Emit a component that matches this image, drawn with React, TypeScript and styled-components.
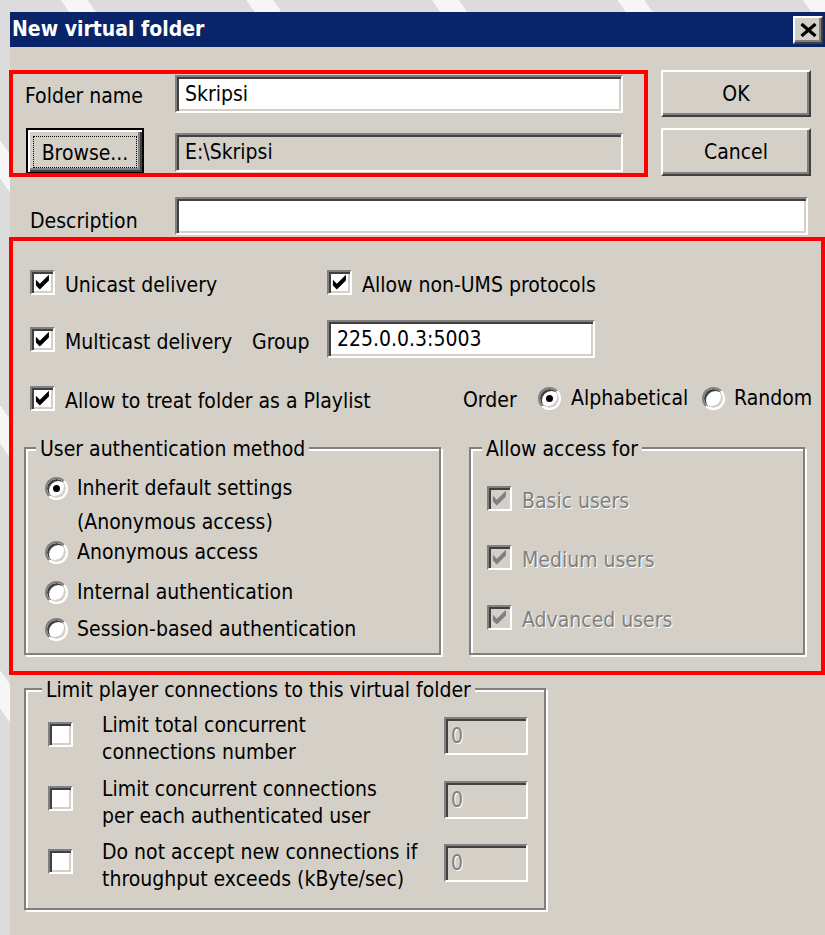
import React from "react";
import styled, { createGlobalStyle, css } from "styled-components";

const UI_FONT = `"DejaVu Sans Condensed", "DejaVu Sans", "Liberation Sans", sans-serif`;

const GlobalStyle = createGlobalStyle`
  html, body { margin: 0; padding: 0; }
  body { background: #dcdcdc; font-family: ${UI_FONT}; }
  #root { width: 825px; height: 935px; }
`;

/* Classic 3D bevels */
const raised = css`
  border: 2px solid;
  border-color: #ffffff #404040 #404040 #ffffff;
  box-shadow: inset -2px -2px 0 #808080;
`;

const sunken = css`
  border: 2px solid;
  border-color: #808080 #ffffff #ffffff #808080;
  box-shadow: inset 2px 2px 0 #404040, inset -2px -2px 0 #d4d0c8;
`;

const Desktop = styled.div`
  position: relative;
  box-sizing: border-box;
  width: 825px;
  height: 935px;
  overflow: hidden;
  padding: 12px 0 0 10px;
  background-color: #dcdcdc;
  background-image: repeating-linear-gradient(
    55deg,
    transparent 0 130px,
    rgba(255, 255, 255, 0.75) 130px 152px
  );
`;

const Window = styled.div`
  box-sizing: border-box;
  width: 815px;
  height: 923px;
  display: flex;
  flex-direction: column;
  background: #d4d0c8;
  color: #000;
  font-family: ${UI_FONT};
  font-size: 21px;
`;

const TitleBar = styled.div`
  flex: none;
  height: 35px;
  display: flex;
  align-items: center;
  justify-content: space-between;
  padding: 0 2px;
  background: #0a246a;
`;

const TitleText = styled.span`
  color: #fff;
  font-weight: bold;
  font-size: 21px;
  line-height: 35px;
  white-space: nowrap;
`;

const CloseButton = styled.button`
  box-sizing: border-box;
  width: 30px;
  height: 28px;
  padding: 0;
  display: flex;
  align-items: center;
  justify-content: center;
  background: #d4d0c8;
  ${raised};
`;

const Body = styled.div`
  flex: 1;
  display: flex;
  flex-direction: column;
  align-items: flex-start;
`;

const TopGrid = styled.div`
  display: grid;
  grid-template-columns: 150px 448px 188px;
  grid-template-rows: 47px 48px;
  row-gap: 11px;
  align-items: center;
  margin: 23px 0 0 15px;
`;

/* Static text; $drop lowers the text inside its line a little */
const Label = styled.span<{ $width?: number; $drop?: number }>`
  flex: none;
  width: ${(p) => (p.$width ? `${p.$width}px` : "auto")};
  padding-top: ${(p) => p.$drop ?? 4}px;
  white-space: nowrap;
  line-height: 26px;
`;

const Field = styled.div<{ $width: number; $height?: number; $muted?: boolean; $pad?: number }>`
  box-sizing: border-box;
  flex: none;
  width: ${(p) => p.$width}px;
  height: ${(p) => p.$height ?? 38}px;
  display: flex;
  align-items: center;
  padding: 0 ${(p) => p.$pad ?? 8}px;
  background: ${(p) => (p.$muted ? "#d4d0c8" : "#fff")};
  white-space: nowrap;
  ${sunken};
`;

const DimText = styled.span`
  color: #808080;
  text-shadow: 1px 1px 0 #fff;
`;

const PushButton = styled.button`
  box-sizing: border-box;
  justify-self: end;
  width: 150px;
  height: 100%;
  padding: 0;
  font: inherit;
  color: #000;
  background: #d4d0c8;
  ${raised};
`;

const DefaultButton = styled.button`
  box-sizing: border-box;
  align-self: start;
  width: 118px;
  height: 46px;
  margin-left: 1px;
  padding: 0;
  display: flex;
  align-items: center;
  justify-content: center;
  font: inherit;
  color: #000;
  background: #d4d0c8;
  border: 2px solid #000;
  box-shadow: inset 2px 2px 0 #fff, inset -2px -2px 0 #404040, inset -4px -4px 0 #808080;
`;

const FocusRing = styled.span`
  box-sizing: border-box;
  width: 104px;
  height: 32px;
  margin-top: 1px;
  padding-top: 3px;
  display: flex;
  align-items: center;
  justify-content: center;
  border: 1px dotted #000;
`;

const FieldRow = styled.div<{ $top: number; $left: number }>`
  display: flex;
  align-items: center;
  margin: ${(p) => p.$top}px 0 0 ${(p) => p.$left}px;
`;

const OptionRow = styled.div<{ $top: number }>`
  display: flex;
  align-items: center;
  height: 38px;
  margin: ${(p) => p.$top}px 0 0 20px;
`;

const Option = styled.label<{ $width?: number; $gap?: number; $top?: number; $disabled?: boolean }>`
  flex: none;
  display: flex;
  align-items: center;
  gap: ${(p) => p.$gap ?? 10}px;
  width: ${(p) => (p.$width ? `${p.$width}px` : "auto")};
  margin-top: ${(p) => p.$top ?? 0}px;
  height: 26px;
  white-space: nowrap;
  color: ${(p) => (p.$disabled ? "#808080" : "#000")};
  text-shadow: ${(p) => (p.$disabled ? "1px 1px 0 #fff" : "none")};
`;

const OptionText = styled.span<{ $drop?: number }>`
  padding-top: ${(p) => p.$drop ?? 0}px;
`;

const CheckBox = styled.span<{ $disabled?: boolean; $top?: number }>`
  box-sizing: border-box;
  flex: none;
  width: 25px;
  height: 25px;
  margin-top: ${(p) => p.$top ?? 0}px;
  display: inline-flex;
  align-items: center;
  justify-content: center;
  background: ${(p) => (p.$disabled ? "#d4d0c8" : "#fff")};
  color: ${(p) => (p.$disabled ? "#808080" : "#000")};
  ${sunken};

  svg {
    display: block;
    width: 17px;
    height: 17px;
  }
`;

const RadioDot = styled.span<{ $checked?: boolean }>`
  box-sizing: border-box;
  flex: none;
  width: 23px;
  height: 23px;
  border-radius: 50%;
  display: inline-flex;
  align-items: center;
  justify-content: center;
  background: #fff;
  ${sunken};

  &::after {
    content: "";
    display: ${(p) => (p.$checked ? "block" : "none")};
    width: 7px;
    height: 7px;
    border-radius: 50%;
    background: #000;
  }
`;

const GroupRow = styled.div`
  display: flex;
  align-items: flex-start;
  gap: 28px;
  margin: 30px 0 0 14px;
`;

const GroupBox = styled.div<{ $width: number; $height: number; $top?: number; $left?: number }>`
  box-sizing: border-box;
  width: ${(p) => p.$width}px;
  height: ${(p) => p.$height}px;
  margin: ${(p) => p.$top ?? 0}px 0 0 ${(p) => p.$left ?? 0}px;
  display: flex;
  flex-direction: column;
  align-items: flex-start;
  border: 2px solid #808080;
  box-shadow: inset 2px 2px 0 #fff, 2px 2px 0 #fff;
`;

const GroupTitle = styled.span<{ $left: number }>`
  display: block;
  margin: -13px 0 0 ${(p) => p.$left}px;
  padding: 0 4px;
  line-height: 26px;
  white-space: nowrap;
  background: #d4d0c8;
`;

const ChoiceRow = styled.div<{ $top: number; $indent: number }>`
  display: flex;
  align-items: center;
  height: 26px;
  margin-top: ${(p) => p.$top}px;
  padding-left: ${(p) => p.$indent}px;
  white-space: nowrap;
`;

const LimitRow = styled.div<{ $top: number }>`
  display: flex;
  align-items: flex-start;
  margin-top: ${(p) => p.$top}px;
  padding-left: 22px;
`;

const LimitText = styled.span`
  flex: none;
  width: 342px;
  margin-left: 29px;
  padding-top: 1px;
  line-height: 27px;
  white-space: nowrap;
`;

const LimitField = styled(Field)`
  margin-top: 6px;
`;

/* Red marker frames drawn over the dialog */
const Marker = styled.div<{ $x: number; $y: number; $w: number; $h: number }>`
  position: absolute;
  left: ${(p) => p.$x}px;
  top: ${(p) => p.$y}px;
  width: ${(p) => p.$w}px;
  height: ${(p) => p.$h}px;
  box-sizing: border-box;
  border: 4px solid #ff0000;
  pointer-events: none;
`;

function Check({ checked = false, disabled = false, top }: { checked?: boolean; disabled?: boolean; top?: number }) {
  return (
    <CheckBox $disabled={disabled} $top={top}>
      {checked && (
        <svg viewBox="0 0 9 9">
          <polygon points="1,3 3.1,5.1 7.9,0.4 7.9,3.4 3.1,8.2 1,6.1" fill="currentColor" />
        </svg>
      )}
    </CheckBox>
  );
}

function CheckOption({
  label,
  checked = true,
  disabled = false,
  width,
  top,
}: {
  label: string;
  checked?: boolean;
  disabled?: boolean;
  width?: number;
  top?: number;
}) {
  return (
    <Option $width={width} $disabled={disabled} $top={top}>
      <Check checked={checked} disabled={disabled} />
      <OptionText $drop={5}>{label}</OptionText>
    </Option>
  );
}

function RadioOption({ label, checked = false, width, gap = 10 }: { label: string; checked?: boolean; width?: number; gap?: number }) {
  return (
    <Option $width={width} $gap={gap}>
      <RadioDot $checked={checked} />
      <OptionText>{label}</OptionText>
    </Option>
  );
}

function CloseGlyph() {
  return (
    <svg width="17" height="14" viewBox="0 0 17 14">
      <path d="M1.5 1 L15.5 13 M15.5 1 L1.5 13" stroke="#000" strokeWidth="3.2" fill="none" />
    </svg>
  );
}

export default function App() {
  return (
    <>
      <GlobalStyle />
      <Desktop>
        <Window>
          <TitleBar>
            <TitleText>New virtual folder</TitleText>
            <CloseButton aria-label="Close">
              <CloseGlyph />
            </CloseButton>
          </TitleBar>

          <Body>
            <TopGrid>
              <Label>Folder name</Label>
              <Field $width={448}>Skripsi</Field>
              <PushButton>OK</PushButton>
              <DefaultButton>
                <FocusRing>Browse...</FocusRing>
              </DefaultButton>
              <Field $width={448} $height={39} $muted>
                {"E:\\Skripsi"}
              </Field>
              <PushButton>Cancel</PushButton>
            </TopGrid>

            <FieldRow $top={21} $left={20}>
              <Label $width={145} $drop={9}>
                Description
              </Label>
              <Field $width={633} />
            </FieldRow>

            <OptionRow $top={28}>
              <CheckOption label="Unicast delivery" width={297} />
              <CheckOption label="Allow non-UMS protocols" />
            </OptionRow>

            <OptionRow $top={19}>
              <CheckOption label="Multicast delivery" width={222} />
              <Label $width={75} $drop={5}>
                Group
              </Label>
              <Field $width={268}>225.0.0.3:5003</Field>
            </OptionRow>

            <OptionRow $top={21}>
              <CheckOption label="Allow to treat folder as a Playlist" width={433} />
              <Label $width={75}>Order</Label>
              <RadioOption label="Alphabetical" checked width={164} />
              <RadioOption label="Random" gap={9} />
            </OptionRow>

            <GroupRow>
              <GroupBox $width={417} $height={208}>
                <GroupTitle $left={10}>User authentication method</GroupTitle>
                <ChoiceRow $top={13} $indent={19}>
                  <RadioOption label="Inherit default settings" checked gap={9} />
                </ChoiceRow>
                <ChoiceRow $top={8} $indent={51}>
                  (Anonymous access)
                </ChoiceRow>
                <ChoiceRow $top={4} $indent={19}>
                  <RadioOption label="Anonymous access" gap={9} />
                </ChoiceRow>
                <ChoiceRow $top={14} $indent={19}>
                  <RadioOption label="Internal authentication" gap={9} />
                </ChoiceRow>
                <ChoiceRow $top={11} $indent={19}>
                  <RadioOption label="Session-based authentication" gap={9} />
                </ChoiceRow>
              </GroupBox>

              <GroupBox $width={336} $height={208}>
                <GroupTitle $left={11}>Allow access for</GroupTitle>
                <ChoiceRow $top={23} $indent={16}>
                  <CheckOption label="Basic users" disabled />
                </ChoiceRow>
                <ChoiceRow $top={33} $indent={16}>
                  <CheckOption label="Medium users" disabled />
                </ChoiceRow>
                <ChoiceRow $top={34} $indent={16}>
                  <CheckOption label="Advanced users" disabled />
                </ChoiceRow>
              </GroupBox>
            </GroupRow>

            <GroupBox $width={522} $height={222} $top={33} $left={14}>
              <GroupTitle $left={16}>Limit player connections to this virtual folder</GroupTitle>
              <LimitRow $top={8}>
                <Check top={11} />
                <LimitText>
                  Limit total concurrent
                  <br />
                  connections number
                </LimitText>
                <LimitField $width={84} $muted $pad={5}>
                  <DimText>0</DimText>
                </LimitField>
              </LimitRow>
              <LimitRow $top={9}>
                <Check top={11} />
                <LimitText>
                  Limit concurrent connections
                  <br />
                  per each authenticated user
                </LimitText>
                <LimitField $width={84} $muted $pad={5}>
                  <DimText>0</DimText>
                </LimitField>
              </LimitRow>
              <LimitRow $top={8}>
                <Check top={11} />
                <LimitText>
                  Do not accept new connections if
                  <br />
                  throughput exceeds (kByte/sec)
                </LimitText>
                <LimitField $width={84} $muted $pad={5}>
                  <DimText>0</DimText>
                </LimitField>
              </LimitRow>
            </GroupBox>
          </Body>
        </Window>

        <Marker $x={9} $y={70} $w={639} $h={107} />
        <Marker $x={9} $y={237} $w={816} $h={438} />
      </Desktop>
    </>
  );
}
